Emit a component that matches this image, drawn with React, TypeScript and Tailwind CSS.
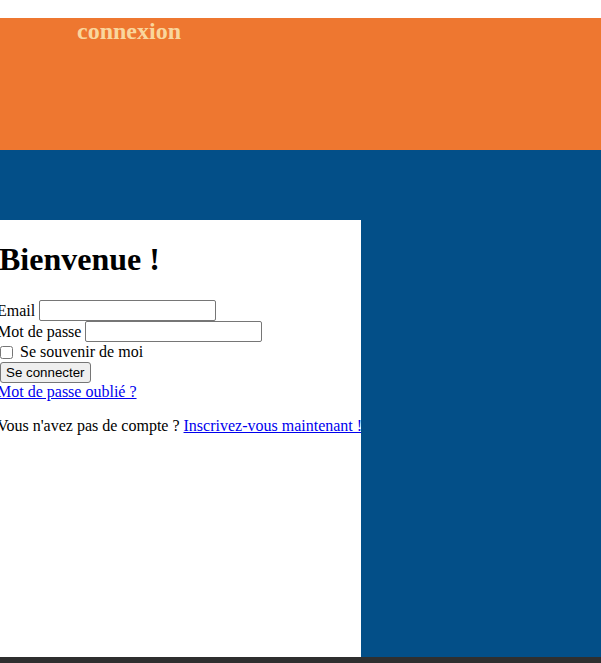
import React from "react";

const serif = { fontFamily: '"Liberation Serif", "Times New Roman", serif' };

export default function App() {
  return (
    <div className="w-[601px] h-[663px] overflow-hidden bg-white text-black" style={serif}>
      {/* top gap */}
      <div className="h-[18px] bg-white" />

      {/* Header */}
      <header className="h-[132px] bg-[#ee7730]">
        <h2 className="pl-[77px] text-[24px] font-bold leading-[26px] text-[#f9d69d]">connexion</h2>
      </header>

      {/* Body */}
      <main className="h-[507px] bg-[#034f88] pt-[70px]">
        <section className="w-[361px] h-[437px] bg-white overflow-hidden">
          <h1 className="-ml-[1px] mt-[21px] mb-[22px] text-[32px] font-bold leading-[37px]">Bienvenue !</h1>

          <form className="text-[16px] -ml-[3px]">
            <div className="flex items-center h-[21px]">
              <label htmlFor="email">Email</label>
              <input
                id="email"
                type="email"
                className="ml-[4px] w-[177px] h-[21px] border border-[#767676] rounded-[2px] px-[2px] bg-white"
              />
            </div>
            <div className="flex items-center h-[21px]">
              <label htmlFor="pwd">Mot de passe</label>
              <input
                id="pwd"
                type="password"
                className="ml-[4px] w-[177px] h-[21px] border border-[#767676] rounded-[2px] px-[2px] bg-white"
              />
            </div>
            <div className="flex items-center h-[20px]">
              <input type="checkbox" id="remember" className="ml-[3px] w-[13px] h-[13px]" />
              <label htmlFor="remember" className="ml-[7px]">Se souvenir de moi</label>
            </div>
            <div className="h-[21px] flex items-start">
              <button
                type="button"
                className="ml-[3px] h-[21px] px-[5px] bg-[#efefef] border border-[#767676] rounded-[3px] text-[13.33px] leading-[15px]"
                style={{ fontFamily: '"Liberation Sans", Arial, sans-serif' }}
              >
                Se connecter
              </button>
            </div>
            <div className="leading-[18px]">
              <a href="#" className="text-[#0000ee] underline">Mot de passe oublié ?</a>
            </div>
            <p className="mt-[16px] leading-[18px] whitespace-nowrap">
              Vous n'avez pas de compte ?{" "}
              <a href="#" className="text-[#0000ee] underline">Inscrivez-vous maintenant !</a>
            </p>
          </form>
        </section>
      </main>

      <div className="h-[6px] bg-[#2f2f2f]" />
    </div>
  );
}
